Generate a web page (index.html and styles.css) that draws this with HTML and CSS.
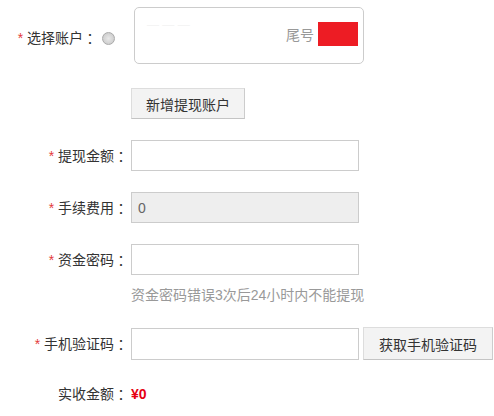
FILE: index.html
```html
<html>
	<head>
		<meta charset="utf-8">
		<link rel="stylesheet" href="styles.css">
	</head>
	<body>
		<div class="form">
			<div class="row accountRow">
				<label class="lbl"><em>*</em> 选择账户<i>：</i><span class="radio"></span></label>
				<div class="card">
					<span class="blur">— — —</span>
					<span class="tail">尾号</span><span class="mask"></span>
				</div>
			</div>
			<div class="row addRow">
				<span class="lbl"></span>
				<button class="btn">新增提现账户</button>
			</div>
			<div class="row">
				<label class="lbl"><em>*</em> 提现金额<i>：</i></label>
				<input class="ipt" type="text">
			</div>
			<div class="row">
				<label class="lbl"><em>*</em> 手续费用<i>：</i></label>
				<input class="ipt readonly" type="text" value="0" readonly>
			</div>
			<div class="row">
				<label class="lbl"><em>*</em> 资金密码<i>：</i></label>
				<input class="ipt" type="password">
			</div>
			<div class="row hintRow">
				<span class="lbl"></span>
				<span class="hint">资金密码错误3次后24小时内不能提现</span>
			</div>
			<div class="row codeRow">
				<label class="lbl"><em>*</em> 手机验证码<i>：</i></label>
				<input class="ipt" type="text">
				<button class="btn codeBtn">获取手机验证码</button>
			</div>
			<div class="row totalRow">
				<label class="lbl">实收金额<i>：</i></label>
				<span class="money">¥0</span>
			</div>
		</div>
	</body>
</html>
```

FILE: styles.css
```css
body{
	margin:0;
	background:#fff;
	font-family:"Liberation Sans","Noto Sans CJK SC",sans-serif;
	font-size:14px;
	color:#333;
}
.form{
	padding-top:7px;
}
.row{
	display:flex;
	align-items:center;
	margin-top:21px;
}
.lbl{
	width:128px;
	flex:none;
	display:flex;
	align-items:center;
	justify-content:flex-end;
	line-height:20px;
	white-space:pre;
}
.lbl em{
	font-style:normal;
	color:#e4393c;
}
.lbl i{
	font-style:normal;
	font-family:"Noto Sans CJK TC",sans-serif;
}
.accountRow{
	margin-top:0;
}
.accountRow .lbl{
	padding-top:5px;
}
.radio{
	width:11px;
	height:11px;
	border:1px solid #aaa;
	border-radius:50%;
	background:radial-gradient(circle,#e8e8e8 0,#d0d0d0 70%,#c4c4c4 100%);
	margin:0 13px 0 5px;
}
.card{
	width:223px;
	height:55px;
	margin-left:6px;
	border:1px solid #ccc;
	border-radius:5px;
	display:flex;
	align-items:center;
	justify-content:flex-end;
	padding-right:5px;
	box-sizing:content-box;
	position:relative;
}
.blur{
	position:absolute;
	left:12px;
	top:10px;
	color:#f4f4f4;
	font-size:12px;
}
.tail{
	color:#999;
	margin-right:4px;
	margin-top:-4px;
}
.mask{
	width:40px;
	height:24px;
	background:#ed1c24;
	margin-top:-4px;
}
.addRow{
	margin-top:24px;
}
.btn{
	height:31px;
	padding:0 14px;
	margin-left:3px;
	border:1px solid #ccc;
	border-color:#ddd #ccc #c4c4c4 #ddd;
	background:#f3f3f3;
	font-family:"Liberation Sans","Noto Sans CJK SC",sans-serif;
	font-size:14px;
	color:#333;
	cursor:pointer;
}
.ipt{
	width:228px;
	height:31px;
	margin:0 0 0 3px;
	padding:0 6px;
	box-sizing:border-box;
	border:1px solid #ccc;
	font-family:"Liberation Sans","Noto Sans CJK SC",sans-serif;
	font-size:14px;
	color:#666;
	outline:none;
}
.readonly{
	background:#eee;
}
.hintRow{
	margin-top:10px;
}
.hint{
	margin-left:3px;
	color:#999;
	line-height:20px;
}
.codeRow{
	margin-top:22px;
}
.codeRow .ipt{
	height:32px;
}
.codeBtn{
	height:33px;
	width:130px;
	padding:0;
	margin-left:4px;
}
.totalRow{
	margin-top:24px;
}
.money{
	margin-left:3px;
	color:#e60012;
	font-weight:bold;
	line-height:20px;
}
```
